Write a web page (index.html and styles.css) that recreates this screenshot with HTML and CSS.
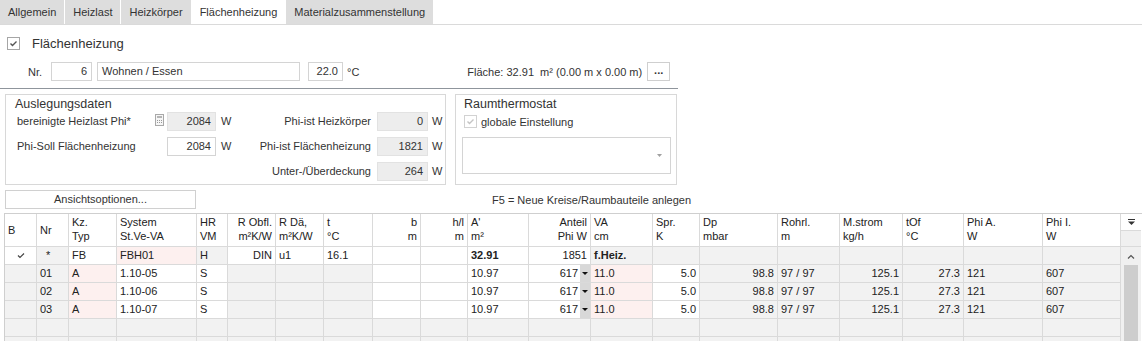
FILE: index.html
```html
<!DOCTYPE html>
<html lang="de">
<head>
  <meta charset="UTF-8">
  <meta name="viewport" content="width=device-width, initial-scale=1.0">
  <title>Flächenheizung</title>
  <link rel="stylesheet" href="styles.css">
</head>
<body>
  <!-- Reiter -->
  <div class="tabs">
    <div class="tab">Allgemein</div>
    <div class="tab">Heizlast</div>
    <div class="tab">Heizkörper</div>
    <div class="tab active">Flächenheizung</div>
    <div class="tab">Materialzusammenstellung</div>
  </div>

  <div class="check-row">
    <span class="checkbox">
      <svg width="11" height="11" viewBox="0 0 11 11"><polyline points="2.5,5.5 4.5,7.5 8.5,3.5" fill="none" stroke="#555" stroke-width="1.4"/></svg>
    </span>
    <span class="check-title">Flächenheizung</span>
  </div>

  <div class="nr-row">
    <span class="nr-label">Nr.</span>
    <div class="field nr">6</div>
    <div class="field name">Wohnen / Essen</div>
    <div class="field temp">22.0</div>
    <span class="unit">°C</span>
    <span class="flaeche">Fläche: 32.91&nbsp; m² (0.00 m x 0.00 m)</span>
    <div class="dots-btn">...</div>
  </div>

  <div class="separator"></div>

  <div class="groups">
    <div class="group ausl">
      <div class="group-title">Auslegungsdaten</div>
      <div class="ausl-grid">
        <span class="glabel">bereinigte Heizlast Phi*</span>
        <span class="calc">
          <svg width="9" height="12" viewBox="0 0 9 12">
            <rect x="0.5" y="0.5" width="8" height="11" fill="#f6f6f6" stroke="#a9a9a9"/>
            <rect x="2" y="2" width="5" height="2" fill="#b5b5b5"/>
            <rect x="2" y="6" width="1" height="1" fill="#999"/><rect x="4" y="6" width="1" height="1" fill="#999"/><rect x="6" y="6" width="1" height="1" fill="#999"/>
            <rect x="2" y="8" width="1" height="1" fill="#999"/><rect x="4" y="8" width="1" height="1" fill="#999"/><rect x="6" y="8" width="1" height="1" fill="#999"/>
          </svg>
        </span>
        <div class="field ro">2084</div>
        <span class="unit-w">W</span>
        <span class="rlabel">Phi-ist Heizkörper</span>
        <div class="field ro">0</div>
        <span class="unit-w2">W</span>

        <span class="glabel">Phi-Soll Flächenheizung</span>
        <span></span>
        <div class="field num">2084</div>
        <span class="unit-w">W</span>
        <span class="rlabel">Phi-ist Flächenheizung</span>
        <div class="field ro">1821</div>
        <span class="unit-w2">W</span>

        <span class="rlabel third">Unter-/Überdeckung</span>
        <div class="field ro">264</div>
        <span class="unit-w2">W</span>
      </div>
    </div>

    <div class="group raum">
      <div class="group-title">Raumthermostat</div>
      <div class="raum-check">
        <span class="checkbox disabled">
          <svg width="11" height="11" viewBox="0 0 11 11"><polyline points="2.5,5.5 4.5,7.5 8.5,3.5" fill="none" stroke="#c4c4c4" stroke-width="1.4"/></svg>
        </span>
        <span>globale Einstellung</span>
      </div>
      <div class="combo">
        <svg width="5" height="3" viewBox="0 0 5 3"><polygon points="0,0 5,0 2.5,3" fill="#a0a0a0"/></svg>
      </div>
    </div>
  </div>

  <div class="options-row">
    <div class="btn-options">Ansichtsoptionen...</div>
    <span class="hint">F5 = Neue Kreise/Raumbauteile anlegen</span>
  </div>

  <!-- Tabelle Heizkreise -->
  <div class="grid">
    <div class="grid-main">
      <div class="row head">
        <div class="cell one">B</div>
        <div class="cell one">Nr</div>
        <div class="cell">Kz.<br>Typ</div>
        <div class="cell">System<br>St.Ve-VA</div>
        <div class="cell">HR<br>VM</div>
        <div class="cell r">R Obfl.<br>m²K/W</div>
        <div class="cell">R Dä,<br>m²K/W</div>
        <div class="cell">t<br>°C</div>
        <div class="cell r">b<br>m</div>
        <div class="cell r">h/l<br>m</div>
        <div class="cell">A'<br>m²</div>
        <div class="cell r">Anteil<br>Phi W</div>
        <div class="cell">VA<br>cm</div>
        <div class="cell">Spr.<br>K</div>
        <div class="cell">Dp<br>mbar</div>
        <div class="cell">Rohrl.<br>m</div>
        <div class="cell">M.strom<br>kg/h</div>
        <div class="cell">tOf<br>°C</div>
        <div class="cell">Phi A.<br>W</div>
        <div class="cell">Phi I.<br>W</div>
      </div>

      <div class="row">
        <div class="cell w center">
          <svg width="8" height="6" viewBox="0 0 8 6"><polyline points="1,2.5 3,4.5 7,0.5" fill="none" stroke="#444" stroke-width="1.2"/></svg>
        </div>
        <div class="cell g star">*</div>
        <div class="cell w">FB</div>
        <div class="cell p">FBH01</div>
        <div class="cell g">H</div>
        <div class="cell w r">DIN</div>
        <div class="cell w">u1</div>
        <div class="cell w">16.1</div>
        <div class="cell w"></div>
        <div class="cell w"></div>
        <div class="cell w b">32.91</div>
        <div class="cell w r">1851</div>
        <div class="cell g b">f.Heiz.</div>
        <div class="cell g"></div>
        <div class="cell g"></div>
        <div class="cell g"></div>
        <div class="cell g"></div>
        <div class="cell g"></div>
        <div class="cell g"></div>
        <div class="cell g"></div>
      </div>

      <div class="row">
        <div class="cell g"></div>
        <div class="cell g">01</div>
        <div class="cell p">A</div>
        <div class="cell w">1.10-05</div>
        <div class="cell w">S</div>
        <div class="cell g"></div>
        <div class="cell g"></div>
        <div class="cell g"></div>
        <div class="cell w"></div>
        <div class="cell w"></div>
        <div class="cell w">10.97</div>
        <div class="cell w dd-cell"><span class="dd-val">617</span><span class="dd"></span></div>
        <div class="cell p">11.0</div>
        <div class="cell w r">5.0</div>
        <div class="cell g r">98.8</div>
        <div class="cell g">97 / 97</div>
        <div class="cell g r">125.1</div>
        <div class="cell g r">27.3</div>
        <div class="cell g">121</div>
        <div class="cell g">607</div>
      </div>

      <div class="row">
        <div class="cell g"></div>
        <div class="cell g">02</div>
        <div class="cell p">A</div>
        <div class="cell w">1.10-06</div>
        <div class="cell w">S</div>
        <div class="cell g"></div>
        <div class="cell g"></div>
        <div class="cell g"></div>
        <div class="cell w"></div>
        <div class="cell w"></div>
        <div class="cell w">10.97</div>
        <div class="cell w dd-cell"><span class="dd-val">617</span><span class="dd"></span></div>
        <div class="cell p">11.0</div>
        <div class="cell w r">5.0</div>
        <div class="cell g r">98.8</div>
        <div class="cell g">97 / 97</div>
        <div class="cell g r">125.1</div>
        <div class="cell g r">27.3</div>
        <div class="cell g">121</div>
        <div class="cell g">607</div>
      </div>

      <div class="row">
        <div class="cell g"></div>
        <div class="cell g">03</div>
        <div class="cell p">A</div>
        <div class="cell w">1.10-07</div>
        <div class="cell w">S</div>
        <div class="cell g"></div>
        <div class="cell g"></div>
        <div class="cell g"></div>
        <div class="cell w"></div>
        <div class="cell w"></div>
        <div class="cell w">10.97</div>
        <div class="cell w dd-cell"><span class="dd-val">617</span><span class="dd"></span></div>
        <div class="cell p">11.0</div>
        <div class="cell w r">5.0</div>
        <div class="cell g r">98.8</div>
        <div class="cell g">97 / 97</div>
        <div class="cell g r">125.1</div>
        <div class="cell g r">27.3</div>
        <div class="cell g">121</div>
        <div class="cell g">607</div>
      </div>

      <div class="row empty">
        <div class="cell"></div><div class="cell"></div><div class="cell"></div><div class="cell"></div><div class="cell"></div>
        <div class="cell"></div><div class="cell"></div><div class="cell"></div><div class="cell"></div><div class="cell"></div>
        <div class="cell"></div><div class="cell"></div><div class="cell"></div><div class="cell"></div><div class="cell"></div>
        <div class="cell"></div><div class="cell"></div><div class="cell"></div><div class="cell"></div><div class="cell"></div>
      </div>
      <div class="row empty">
        <div class="cell"></div><div class="cell"></div><div class="cell"></div><div class="cell"></div><div class="cell"></div>
        <div class="cell"></div><div class="cell"></div><div class="cell"></div><div class="cell"></div><div class="cell"></div>
        <div class="cell"></div><div class="cell"></div><div class="cell"></div><div class="cell"></div><div class="cell"></div>
        <div class="cell"></div><div class="cell"></div><div class="cell"></div><div class="cell"></div><div class="cell"></div>
      </div>
    </div>

    <!-- Scrollbereich -->
    <div class="grid-scroll">
      <div class="sc-filter">
        <svg width="9" height="7" viewBox="0 0 9 7"><line x1="1" y1="0.5" x2="8" y2="0.5" stroke="#333"/><polygon points="1,2.5 8,2.5 4.5,6" fill="#333"/></svg>
      </div>
      <div class="sc-gap"></div>
      <div class="sc-up">
        <svg width="8" height="5" viewBox="0 0 8 5"><polyline points="1,4.5 4,1.5 7,4.5" fill="none" stroke="#555" stroke-width="1.2"/></svg>
      </div>
      <div class="sc-thumb"></div>
    </div>
  </div>
</body>
</html>
```

FILE: styles.css
```css
/* Grundlayout */
body {
  margin: 0;
  font-family: "Liberation Sans", Arial, sans-serif;
  font-size: 11px;
  color: #333;
  background-color: #fff;
}

/* Reiter */
.tabs {
  display: flex;
  height: 24px;
  border-bottom: 1px solid #dadada;
}

.tab {
  padding: 0 8px;
  margin-right: 1px;
  line-height: 24px;
  background-color: #dddddd;
  color: #333;
}

.tab.active {
  background-color: #fff;
}

/* Checkbox Flächenheizung */
.check-row {
  display: flex;
  align-items: center;
  height: 36px;
  padding-left: 7px;
}

.checkbox {
  display: flex;
  width: 11px;
  height: 11px;
  border: 1px solid #a6a6a6;
  background-color: #fff;
}

.checkbox.disabled {
  border-color: #d2d2d2;
}

.check-title {
  margin-left: 12px;
  font-size: 13px;
}

/* Nr. Zeile */
.nr-row {
  display: flex;
  align-items: center;
  height: 19px;
  margin-top: 1px;
  padding-left: 28px;
}

.nr-label {
  width: 23px;
}

.field {
  box-sizing: border-box;
  height: 19px;
  padding: 0 4px;
  line-height: 17px;
  border: 1px solid #d4d4d4;
  background-color: #fff;
  white-space: nowrap;
}

.field.nr {
  width: 41px;
  text-align: right;
}

.field.name {
  width: 203px;
  margin-left: 5px;
}

.field.temp {
  width: 35px;
  margin-left: 8px;
  text-align: right;
}

.unit {
  margin-left: 4px;
}

.flaeche {
  margin-left: 108px;
}

.dots-btn {
  box-sizing: border-box;
  width: 23px;
  height: 19px;
  margin-left: 5px;
  border: 1px solid #cfcfcf;
  text-align: center;
  font-weight: bold;
  line-height: 15px;
}

.separator {
  width: 678px;
  height: 1px;
  margin-top: 7px;
  background-color: #8f959c;
}

/* Gruppenboxen */
.groups {
  display: flex;
  gap: 9px;
  margin-top: 5px;
  padding-left: 5px;
}

.group {
  box-sizing: border-box;
  height: 91px;
  border: 1px solid #d8d8d8;
}

.group.ausl {
  width: 441px;
}

.group.raum {
  width: 222px;
}

.group-title {
  padding: 1px 0 0 9px;
  font-size: 12.5px;
  line-height: 16px;
}

.raum .group-title {
  padding-left: 8px;
}

.ausl-grid {
  display: grid;
  grid-template-columns: 147px 14px 49px 19px 142px 51px 17px;
  grid-auto-rows: 19px;
  row-gap: 6px;
}

.glabel {
  padding-left: 11px;
  line-height: 19px;
  white-space: nowrap;
}

.rlabel {
  padding-right: 6px;
  text-align: right;
  line-height: 19px;
  white-space: nowrap;
}

.rlabel.third {
  grid-column: 5;
}

.calc {
  display: flex;
  align-items: center;
  padding-left: 2px;
  padding-bottom: 3px;
}

.unit-w {
  padding-left: 5px;
  line-height: 19px;
}

.unit-w2 {
  padding-left: 4px;
  line-height: 19px;
}

.field.ro {
  background-color: #ededed;
  border-color: #e2e2e2;
  text-align: right;
}

.field.num {
  text-align: right;
}

.raum-check {
  display: flex;
  align-items: center;
  gap: 4px;
  height: 19px;
  padding-left: 8px;
}

.combo {
  box-sizing: border-box;
  display: flex;
  align-items: center;
  justify-content: flex-end;
  width: 209px;
  height: 37px;
  margin: 6px 0 0 6px;
  padding-right: 8px;
  border: 1px solid #d4d4d4;
}

/* Ansichtsoptionen */
.options-row {
  display: flex;
  align-items: center;
  height: 19px;
  margin-top: 5px;
  padding-left: 5px;
}

.btn-options {
  box-sizing: border-box;
  width: 191px;
  height: 19px;
  border: 1px solid #d0d0d0;
  text-align: center;
  line-height: 17px;
}

.hint {
  margin-left: 296px;
}

/* Tabelle */
.grid {
  display: flex;
  height: 127px;
  overflow: hidden;
  margin: 4px 0 0 4px;
  border-left: 1px solid #cfcfcf;
  border-top: 1px solid #cfcfcf;
}

.grid-main {
  width: 1116px;
}

.row {
  display: grid;
  grid-template-columns: 32px 32px 48px 80px 31px 48px 48px 49px 48px 47px 61px 62px 62px 47px 78px 62px 63px 61px 79px 78px;
  height: 18px;
}

.row.head {
  height: 33px;
}

.cell {
  box-sizing: border-box;
  padding: 0 3px;
  border-right: 1px solid #dadada;
  border-bottom: 1px solid #dadada;
  line-height: 17px;
  color: #222;
  white-space: nowrap;
  overflow: hidden;
}

.head .cell {
  padding-top: 1px;
  line-height: 14px;
  background-color: #fff;
}

.head .cell.one {
  padding-top: 0;
  line-height: 32px;
}

.cell.r {
  text-align: right;
}

.cell.b {
  font-weight: bold;
}

.cell.w {
  background-color: #fff;
}

.cell.g,
.row.empty .cell {
  background-color: #f2f2f2;
}

.cell.p {
  background-color: #fdf0ef;
}

.cell.center {
  display: flex;
  align-items: center;
  justify-content: center;
}

.cell.star {
  padding-left: 9px;
}

.dd-cell {
  display: flex;
  padding-right: 0;
}

.dd-val {
  flex: 1;
  text-align: right;
  padding-right: 2px;
}

.dd {
  width: 10px;
  background-color: #d8d8d8;
  display: flex;
  align-items: center;
  justify-content: center;
}

.dd::after {
  content: "";
  border-left: 3px solid transparent;
  border-right: 3px solid transparent;
  border-top: 3px solid #111;
}

/* Scrollleiste */
.grid-scroll {
  display: flex;
  flex-direction: column;
  width: 20px;
  background-color: #f0f0f0;
}

.sc-filter {
  box-sizing: border-box;
  display: flex;
  align-items: center;
  justify-content: center;
  height: 17px;
  background-color: #fff;
  border-bottom: 1px solid #dadada;
}

.sc-gap {
  box-sizing: border-box;
  height: 16px;
  border-bottom: 1px solid #dadada;
}

.sc-up {
  display: flex;
  align-items: center;
  justify-content: center;
  height: 18px;
}

.sc-thumb {
  flex: 1;
  margin: 0 3px;
  background-color: #cdcdcd;
}
```
